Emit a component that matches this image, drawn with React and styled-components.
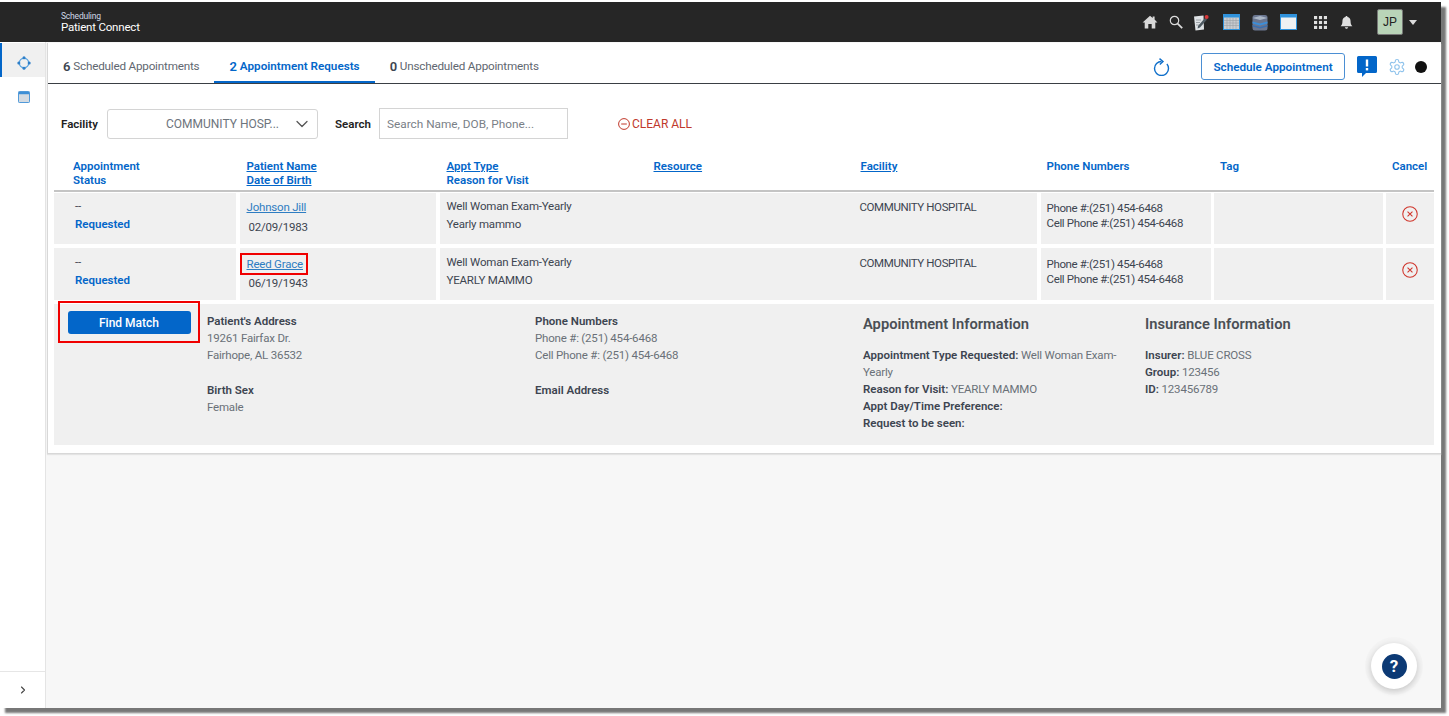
import React from 'react';
import styled, { createGlobalStyle } from 'styled-components';
import { ChevronDown, ChevronRight } from 'lucide-react';

const GlobalStyle = createGlobalStyle`
  html, body {
    margin: 0;
    padding: 0;
    background: #fff;
  }
  body {
    font-family: Roboto, "Noto Sans", sans-serif;
    font-size: 11.5px;
    letter-spacing: -0.2px;
    color: #3d4550;
  }
`;

const blue = '#0366c9';
const red = '#f00000';

const Page = styled.div`
  width: 1449px;
  height: 716px;
  padding-top: 2px;
  box-sizing: border-box;
  overflow: hidden;
`;

const Frame = styled.div`
  display: flex;
  flex-direction: column;
  width: 1441px;
  height: 706px;
  position: relative;
  background: #f7f7f7;
  box-shadow: 5px 5px 2px #777;
`;

const TopBar = styled.header`
  display: flex;
  align-items: center;
  flex: 0 0 40px;
  padding-left: 61px;
  padding-right: 24px;
  background: #262626;
  color: #fff;
`;

const Brand = styled.div`
  flex: 1;
  line-height: 11px;
  margin-top: -1px;
`;

const BrandSub = styled.div`
  font-size: 8.5px;
  color: #cfd8e6;
`;

const BrandName = styled.div`
  font-size: 11.5px;
`;

const TopIcons = styled.div`
  display: flex;
  align-items: center;
`;

const TopIcon = styled.svg`
  display: block;
  flex: none;
  margin-right: ${props => props.$gap}px;
`;

const Avatar = styled.div`
  display: flex;
  align-items: center;
  justify-content: center;
  width: 26px;
  height: 26px;
  box-sizing: border-box;
  margin-right: 6px;
  background: #b9d4b8;
  border: 1px solid #777;
  border-radius: 2px;
  font-family: "Liberation Sans", sans-serif;
  font-size: 12px;
  letter-spacing: 0;
  color: #222;
`;

const Caret = styled.div`
  width: 0;
  height: 0;
  border-left: 4.5px solid transparent;
  border-right: 4.5px solid transparent;
  border-top: 5px solid #ddd;
`;

const Body = styled.div`
  display: flex;
  flex: 1;
  min-height: 0;
`;

const Sidebar = styled.nav`
  display: flex;
  flex-direction: column;
  flex: 0 0 46px;
  padding-top: 1px;
  background: #fff;
  border-right: 1px solid #e4e4e4;
  box-sizing: border-box;
`;

const SideItem = styled.div`
  display: flex;
  align-items: center;
  justify-content: center;
  box-sizing: border-box;
  height: ${props => props.$active ? 34 : 40}px;
  padding-top: ${props => props.$active ? 6 : 0}px;
  background: ${props => props.$active ? '#f0f0f0' : '#fff'};
  border-left: 2px solid ${props => props.$active ? blue : 'transparent'};
`;

const SideSpacer = styled.div`
  flex: 1;
`;

const SideToggle = styled.div`
  display: flex;
  align-items: center;
  justify-content: center;
  height: 36px;
  border-top: 1px solid #e6e6e6;
  color: #444;
`;

const Main = styled.main`
  flex: 1;
  min-width: 0;
  padding-left: 1px;
  padding-top: 1px;
`;

const Card = styled.section`
  height: 411px;
  box-sizing: border-box;
  background: #fff;
  border-bottom: 1px solid #d8d8d8;
  border-left: 1px solid #d8d8d8;
  box-shadow: 0 1px 1px #e4e4e4;
`;

const TabBar = styled.div`
  display: flex;
  align-items: center;
  height: 41px;
  box-sizing: border-box;
  border-bottom: 1px solid #3a3f44;
`;

const Tab = styled.div`
  display: flex;
  align-items: center;
  gap: 3px;
  height: 100%;
  box-sizing: border-box;
  padding: 8px 15px 0;
  border-bottom: 2px solid ${props => props.$active ? blue : 'transparent'};
  color: ${props => props.$active ? blue : '#5f6770'};
  font-size: 11.7px;
  font-weight: ${props => props.$active ? 600 : 400};
  letter-spacing: ${props => props.$active ? 0 : '-0.2px'};
  white-space: nowrap;
  strong {
    color: ${props => props.$active ? blue : '#3d4550'};
    font-size: 13px;
    font-weight: 600;
  }
`;

const TabActions = styled.div`
  display: flex;
  align-items: center;
  margin-left: auto;
  padding-right: 14px;
  padding-top: 7px;
`;

const OutlineButton = styled.button`
  width: 144px;
  height: 27px;
  margin: 0 12px 0 31px;
  padding: 0;
  background: #fff;
  border: 1px solid #4b8fd4;
  border-radius: 3px;
  color: ${blue};
  font: 600 11.7px Roboto, sans-serif;
`;

const AlertIcon = styled.svg`
  margin-right: 11px;
`;

const StatusDot = styled.span`
  width: 12px;
  height: 12px;
  margin-left: 9px;
  background: #111;
  border-radius: 50%;
`;

const Filters = styled.div`
  display: flex;
  align-items: center;
  height: 72px;
  box-sizing: border-box;
  padding: 24px 0 17px 13px;
`;

const FilterLabel = styled.label`
  width: ${props => props.$width}px;
  flex: none;
  color: #222;
  font-weight: 600;
  letter-spacing: 0;
`;

const Select = styled.div`
  display: flex;
  align-items: center;
  justify-content: flex-end;
  width: 211px;
  height: 30px;
  box-sizing: border-box;
  margin-right: 17px;
  padding-right: 5px;
  gap: 13px;
  border: 1px solid #d4d4d4;
  border-radius: 3px;
  color: #6d747c;
  font-size: 12px;
  letter-spacing: 0;
  svg {
    color: #555;
  }
`;

const SearchInput = styled.input`
  width: 189px;
  height: 31px;
  box-sizing: border-box;
  padding: 0 7px;
  border: 1px solid #d4d4d4;
  font: 11.8px Roboto, sans-serif;
  &::placeholder {
    color: #7a8087;
    opacity: 1;
  }
`;

const ClearAll = styled.div`
  display: flex;
  align-items: center;
  gap: 2px;
  margin-left: 50px;
  color: #c0392b;
  font-size: 12px;
  letter-spacing: 0;
`;

const Table = styled.div`
  padding: 0 7px 0 6px;
`;

const columns = '182px 196.5px 203.5px 203.5px 183.5px 170px 168.5px 48px';

const HeadRow = styled.div`
  display: grid;
  grid-template-columns: ${columns};
  column-gap: 3.5px;
  height: 36px;
  padding-top: 4px;
  box-sizing: border-box;
  border-bottom: 2px solid #c4c4c4;
`;

const HeadCell = styled.div`
  padding-left: ${props => props.$pad || 7}px;
  color: ${blue};
  font-weight: 600;
  letter-spacing: 0;
  line-height: 13.5px;
`;

const HeadText = styled.span`
  display: block;
  text-decoration: ${props => props.$link ? 'underline' : 'none'};
`;

const Row = styled.div`
  --offset: ${props => props.$tall ? 1 : 0}px;
  display: grid;
  grid-template-columns: ${columns};
  column-gap: 3.5px;
  height: ${props => props.$tall ? 52 : 51}px;
  margin-top: ${props => props.$first ? 1 : 4}px;
`;

const Cell = styled.div`
  grid-column: ${props => props.$span || 'auto'};
  display: flex;
  background: #f0f0f0;
  min-width: 0;
`;

const StatusCell = styled(Cell)`
  flex-direction: column;
  padding: calc(4px + var(--offset)) 0 0 21px;
  line-height: 18px;
`;

const Requested = styled.div`
  color: ${blue};
  font-weight: 600;
  letter-spacing: 0;
`;

const NameCell = styled(Cell)`
  flex-direction: column;
  align-items: flex-start;
  padding: calc(6px + var(--offset)) 0 0 7px;
`;

const PatientLink = styled.a`
  color: #2e7dc2;
  text-decoration: underline;
  line-height: 17px;
`;

const MarkedName = styled.div`
  margin: -2px 0 -3px -7px;
  padding: 0 3px 0 5px;
  border: 2px solid ${red};
  line-height: 18px;
`;

const Dob = styled.div`
  margin: 3px 0 0 2px;
  line-height: 17px;
`;

const TypeCell = styled(Cell)`
  position: relative;
  flex-direction: column;
  padding: calc(4px + var(--offset)) 0 0 7px;
  line-height: 18px;
`;

const FacilityName = styled.div`
  position: absolute;
  left: 420px;
  top: calc(5px + var(--offset));
  color: #3d4550;
  letter-spacing: -0.4px;
`;

const PhoneCell = styled(Cell)`
  flex-direction: column;
  padding: calc(8px + var(--offset)) 0 0 6px;
  letter-spacing: -0.35px;
  line-height: 15px;
`;

const CancelCell = styled(Cell)`
  align-items: center;
  justify-content: center;
  padding-bottom: 9px;
`;

const Detail = styled.div`
  display: grid;
  grid-template-columns: 153px 328px 328px 282px 1fr;
  height: 141px;
  margin-top: 4px;
  background: #f0f0f0;
`;

const MatchMark = styled.div`
  display: flex;
  align-items: flex-start;
  justify-content: center;
  width: 142px;
  height: 42px;
  box-sizing: border-box;
  margin: -3px 0 0 4px;
  padding-top: 8px;
  border: 2px solid ${red};
`;

const MatchButton = styled.button`
  width: 123px;
  height: 23px;
  padding: 0;
  background: ${blue};
  border: 0;
  border-radius: 3px;
  color: #fff;
  font: 500 12px Roboto, sans-serif;
`;

const InfoColumn = styled.div`
  padding-top: 9px;
  line-height: 17px;
`;

const InfoLabel = styled.div`
  color: #3d4550;
  font-weight: 600;
  letter-spacing: 0;
`;

const InfoText = styled.div`
  color: #6a7078;
`;

const InfoGroup = styled.div`
  margin-bottom: 18px;
`;

const InfoTitle = styled.h3`
  margin: 1px 0 13px;
  color: #4a4f55;
  font-size: 14.7px;
  font-weight: 600;
  letter-spacing: 0;
  line-height: 20px;
`;

const InfoLine = styled.div`
  width: ${props => props.$width ? `${props.$width}px` : 'auto'};
  line-height: 17px;
  color: #6a7078;
  b {
    color: #3d4550;
    font-weight: 600;
    letter-spacing: 0;
  }
`;

const HelpButton = styled.div`
  position: absolute;
  right: 24px;
  bottom: 19px;
  display: flex;
  align-items: center;
  justify-content: center;
  width: 46px;
  height: 46px;
  background: #fff;
  border-radius: 50%;
  box-shadow: 0 2px 6px rgba(0, 0, 0, 0.2), 0 0 0 6px rgba(0, 0, 0, 0.015);
`;

const HelpMark = styled.div`
  display: flex;
  align-items: center;
  justify-content: center;
  width: 25px;
  height: 25px;
  background: #0c3a75;
  border-radius: 50%;
  color: #fff;
  font: 700 17px Roboto, sans-serif;
`;

function HomeIcon() {
  return (
    <TopIcon $gap={11} width="16" height="14" viewBox="0 0 16 14">
      <path d="M8 .8 0.6 7.400h2.100V13.400h3.600V9h3.400v4.400h3.600V7.400h2.100L12.600 4.600V1.600h-1.900v1.300z" fill="#d8d8d8" />
    </TopIcon>
  );
}

function SearchIcon() {
  return (
    <TopIcon $gap={10} width="14" height="14" viewBox="0 0 14 14" fill="none" stroke="#dcdcdc">
      <circle cx="5.500" cy="5.500" r="4.200" strokeWidth="1.200" />
      <path d="m8.600 8.600 4.600 4.600" strokeWidth="1.700" />
    </TopIcon>
  );
}

function NoteIcon() {
  return (
    <TopIcon $gap={14} width="16" height="17" viewBox="0 0 16 17">
      <path d="M1 2.500 10.500 1.500 11 15.500 2.500 16.500z" fill="#dfe3e6" />
      <path d="M3 6h5M3 8.500h4M3 11h4" stroke="#8a9298" strokeWidth=".8" />
      <path d="m5 12 7-8 2 1.600-7 8-2.400.8z" fill="#4e5a62" />
      <circle cx="13.600" cy="3" r="2" fill="#d8383a" />
    </TopIcon>
  );
}

function CalendarGridIcon() {
  return (
    <TopIcon $gap={12} width="17" height="16" viewBox="0 0 17 16">
      <rect x=".5" y=".5" width="16" height="15" fill="#c9ccd0" stroke="#2f92dc" />
      <rect x="1" y="1" width="15" height="2.500" fill="#2f92dc" />
      <path d="M4 4v11M7 4v11M10 4v11M13 4v11M1 6.500h15M1 9h15M1 11.500h15" stroke="#9b9fa4" strokeWidth=".6" />
    </TopIcon>
  );
}

function StackIcon() {
  return (
    <TopIcon $gap={12} width="16" height="17" viewBox="0 0 16 17">
      <rect x=".5" y="1" width="15" height="15.500" rx="2.500" fill="#6a7690" />
      <path d="M.5 4 8 2l7.500 2-7.500 2z" fill="#aab6c6" />
      <path d="M.5 7.500 8 9.500l7.500-2v2L8 11.500l-7.500-2z" fill="#3c8ed8" />
      <path d="M.5 11 8 13l7.500-2v1.500L8 14.500l-7.500-2z" fill="#3a6fb0" />
    </TopIcon>
  );
}

function WindowIcon() {
  return (
    <TopIcon $gap={17} width="17" height="16" viewBox="0 0 17 16">
      <rect x=".5" y=".5" width="16" height="15" fill="#eef0f2" stroke="#2f92dc" />
      <rect x="1" y="1" width="15" height="2.500" fill="#2f92dc" />
    </TopIcon>
  );
}

function AppsIcon() {
  const dots = [];
  [0, 5, 10].forEach(y => {
    [0, 5, 10].forEach(x => {
      dots.push(<rect key={`${x}-${y}`} x={x} y={y} width="3.200" height="3.200" fill="#e0e0e0" />);
    });
  });
  return (
    <TopIcon $gap={13} width="13" height="13" viewBox="0 0 13.200 13.200">
      {dots}
    </TopIcon>
  );
}

function BellIcon() {
  return (
    <TopIcon $gap={24} width="13" height="15" viewBox="0 0 14 15">
      <path d="M7 .6c.7 0 1.100.5 1.100 1.100C10.400 2.200 11.400 4 11.400 6.500c0 2.500.6 3.600 1.900 5H.7c1.300-1.400 1.900-2.500 1.900-5C2.600 4 3.600 2.200 5.900 1.700 5.900 1.100 6.300.6 7 .6z" fill="#e0e0e0" />
      <path d="M5.200 12.600h3.600c-.2 1-.9 1.600-1.800 1.600s-1.600-.6-1.800-1.600z" fill="#e0e0e0" />
    </TopIcon>
  );
}

function TargetIcon() {
  return (
    <svg width="14" height="14" viewBox="0 0 14 14" fill="none">
      <circle cx="7" cy="7" r="4.700" stroke="#5ba3e0" strokeWidth="1.400" />
      <circle cx="7" cy="1.800" r="1.500" fill="#2f7fc8" />
      <circle cx="7" cy="12.200" r="1.500" fill="#2f7fc8" />
      <circle cx="1.800" cy="7" r="1.500" fill="#2f7fc8" />
      <circle cx="12.200" cy="7" r="1.500" fill="#2f7fc8" />
    </svg>
  );
}

function SideCalendarIcon() {
  return (
    <svg width="12" height="12" viewBox="0 0 13 13">
      <rect x=".5" y=".5" width="12" height="12" rx="1" fill="#d4dbe2" stroke="#3d8fd6" />
      <rect x="1" y="1" width="11" height="2.500" fill="#3d8fd6" />
    </svg>
  );
}

function RefreshIcon() {
  return (
    <svg width="17" height="18" viewBox="0 0 17 18" fill="none" stroke="#0f6fca" strokeWidth="1.400">
      <path d="M8.500 3.500a7 7 0 1 0 7 7 7 7 0 0 0-1.600-4.500" />
      <path d="M6.500 .6 10 3.500 6.800 6.400" />
    </svg>
  );
}

function AlertBubble() {
  return (
    <AlertIcon width="20" height="21" viewBox="0 0 20 21">
      <path d="M1.500 0h17A1.500 1.500 0 0 1 20 1.500v14a1.500 1.500 0 0 1-1.500 1.500H9l-4 4v-4H1.500A1.500 1.500 0 0 1 0 15.500v-14A1.500 1.500 0 0 1 1.500 0z" fill="#0366c9" />
      <rect x="8.800" y="3.500" width="2.400" height="7" fill="#fff" />
      <rect x="8.800" y="12" width="2.400" height="2.400" fill="#fff" />
    </AlertIcon>
  );
}

function GearIcon() {
  return (
    <svg width="18" height="18" viewBox="0 0 24 24" fill="none" stroke="#8fc3ec" strokeWidth="1.500" strokeLinejoin="round">
      <path d="M12.220 2h-.44a2 2 0 0 0-2 2v.18a2 2 0 0 1-1 1.730l-.43.250a2 2 0 0 1-2 0l-.15-.08a2 2 0 0 0-2.730.730l-.22.380a2 2 0 0 0 .730 2.730l.15.100a2 2 0 0 1 1 1.720v.510a2 2 0 0 1-1 1.740l-.15.090a2 2 0 0 0-.730 2.730l.22.380a2 2 0 0 0 2.730.730l.15-.08a2 2 0 0 1 2 0l.43.250a2 2 0 0 1 1 1.730V20a2 2 0 0 0 2 2h.44a2 2 0 0 0 2-2v-.18a2 2 0 0 1 1-1.730l.43-.250a2 2 0 0 1 2 0l.15.080a2 2 0 0 0 2.730-.730l.22-.390a2 2 0 0 0-.730-2.730l-.15-.080a2 2 0 0 1-1-1.740v-.500a2 2 0 0 1 1-1.740l.15-.090a2 2 0 0 0 .730-2.730l-.22-.380a2 2 0 0 0-2.730-.730l-.15.080a2 2 0 0 1-2 0l-.43-.250a2 2 0 0 1-1-1.730V4a2 2 0 0 0-2-2z" />
      <circle cx="12" cy="12" r="3" />
    </svg>
  );
}

function CancelIcon() {
  return (
    <svg width="16" height="16" viewBox="0 0 15 15" fill="none" stroke="#d0352b">
      <circle cx="7.500" cy="7.500" r="6.800" strokeWidth="1" />
      <path d="m5.200 5.200 4.600 4.600M9.800 5.200l-4.600 4.600" strokeWidth="1" />
    </svg>
  );
}

function ClearIcon() {
  return (
    <svg width="12" height="12" viewBox="0 0 12 12" fill="none" stroke="#c0392b">
      <circle cx="6" cy="6" r="5.400" />
      <path d="M3.200 6h5.600" />
    </svg>
  );
}

const requests = [
  { name: 'Johnson Jill', dob: '02/09/1983', reason: 'Yearly mammo' },
  { name: 'Reed Grace', dob: '06/19/1943', reason: 'YEARLY MAMMO', marked: true }
];

export default function App() {
  return (
    <Page>
      <GlobalStyle />
      <Frame>
        <TopBar>
          <Brand>
            <BrandSub>Scheduling</BrandSub>
            <BrandName>Patient Connect</BrandName>
          </Brand>
          <TopIcons>
            <HomeIcon />
            <SearchIcon />
            <NoteIcon />
            <CalendarGridIcon />
            <StackIcon />
            <WindowIcon />
            <AppsIcon />
            <BellIcon />
            <Avatar>JP</Avatar>
            <Caret />
          </TopIcons>
        </TopBar>
        <Body>
          <Sidebar>
            <SideItem $active><TargetIcon /></SideItem>
            <SideItem><SideCalendarIcon /></SideItem>
            <SideSpacer />
            <SideToggle><ChevronRight size={12} strokeWidth={2.200} /></SideToggle>
          </Sidebar>
          <Main>
            <Card>
              <TabBar>
                <Tab><strong>6</strong> Scheduled Appointments</Tab>
                <Tab $active><strong>2</strong> Appointment Requests</Tab>
                <Tab><strong>0</strong> Unscheduled Appointments</Tab>
                <TabActions>
                  <RefreshIcon />
                  <OutlineButton>Schedule Appointment</OutlineButton>
                  <AlertBubble />
                  <GearIcon />
                  <StatusDot />
                </TabActions>
              </TabBar>
              <Filters>
                <FilterLabel $width={46}>Facility</FilterLabel>
                <Select>
                  COMMUNITY HOSP...
                  <ChevronDown size={20} strokeWidth={1.500} />
                </Select>
                <FilterLabel $width={44}>Search</FilterLabel>
                <SearchInput placeholder="Search Name, DOB, Phone..." />
                <ClearAll><ClearIcon />CLEAR ALL</ClearAll>
              </Filters>
              <Table>
                <HeadRow>
                  <HeadCell $pad={19}><HeadText>Appointment</HeadText><HeadText>Status</HeadText></HeadCell>
                  <HeadCell><HeadText $link>Patient Name</HeadText><HeadText $link>Date of Birth</HeadText></HeadCell>
                  <HeadCell><HeadText $link>Appt Type</HeadText><HeadText>Reason for Visit</HeadText></HeadCell>
                  <HeadCell><HeadText $link>Resource</HeadText></HeadCell>
                  <HeadCell><HeadText $link>Facility</HeadText></HeadCell>
                  <HeadCell $pad={6}><HeadText>Phone Numbers</HeadText></HeadCell>
                  <HeadCell $pad={6}><HeadText>Tag</HeadText></HeadCell>
                  <HeadCell $pad={6}><HeadText>Cancel</HeadText></HeadCell>
                </HeadRow>
                {requests.map((item, index) => (
                  <Row key={item.name} $first={index === 0} $tall={index === 1}>
                    <StatusCell>
                      <div>--</div>
                      <Requested>Requested</Requested>
                    </StatusCell>
                    <NameCell>
                      {item.marked ? (
                        <MarkedName><PatientLink>{item.name}</PatientLink></MarkedName>
                      ) : (
                        <PatientLink>{item.name}</PatientLink>
                      )}
                      <Dob>{item.dob}</Dob>
                    </NameCell>
                    <TypeCell $span="span 3">
                      <div>Well Woman Exam-Yearly</div>
                      <div>{item.reason}</div>
                      <FacilityName>COMMUNITY HOSPITAL</FacilityName>
                    </TypeCell>
                    <PhoneCell>
                      <div>Phone #:(251) 454-6468</div>
                      <div>Cell Phone #:(251) 454-6468</div>
                    </PhoneCell>
                    <Cell />
                    <CancelCell><CancelIcon /></CancelCell>
                  </Row>
                ))}
                <Detail>
                  <div>
                    <MatchMark><MatchButton>Find Match</MatchButton></MatchMark>
                  </div>
                  <InfoColumn>
                    <InfoGroup>
                      <InfoLabel>Patient's Address</InfoLabel>
                      <InfoText>19261 Fairfax Dr.</InfoText>
                      <InfoText>Fairhope, AL 36532</InfoText>
                    </InfoGroup>
                    <InfoGroup>
                      <InfoLabel>Birth Sex</InfoLabel>
                      <InfoText>Female</InfoText>
                    </InfoGroup>
                  </InfoColumn>
                  <InfoColumn>
                    <InfoGroup>
                      <InfoLabel>Phone Numbers</InfoLabel>
                      <InfoText>Phone #: (251) 454-6468</InfoText>
                      <InfoText>Cell Phone #: (251) 454-6468</InfoText>
                    </InfoGroup>
                    <InfoGroup>
                      <InfoLabel>Email Address</InfoLabel>
                    </InfoGroup>
                  </InfoColumn>
                  <InfoColumn>
                    <InfoTitle>Appointment Information</InfoTitle>
                    <InfoLine $width={262}><b>Appointment Type Requested:</b> Well Woman Exam-Yearly</InfoLine>
                    <InfoLine><b>Reason for Visit:</b> YEARLY MAMMO</InfoLine>
                    <InfoLine><b>Appt Day/Time Preference:</b></InfoLine>
                    <InfoLine><b>Request to be seen:</b></InfoLine>
                  </InfoColumn>
                  <InfoColumn>
                    <InfoTitle>Insurance Information</InfoTitle>
                    <InfoLine><b>Insurer:</b> BLUE CROSS</InfoLine>
                    <InfoLine><b>Group:</b> 123456</InfoLine>
                    <InfoLine><b>ID:</b> 123456789</InfoLine>
                  </InfoColumn>
                  <div />
                </Detail>
              </Table>
            </Card>
          </Main>
        </Body>
        <HelpButton><HelpMark>?</HelpMark></HelpButton>
      </Frame>
    </Page>
  );
}
